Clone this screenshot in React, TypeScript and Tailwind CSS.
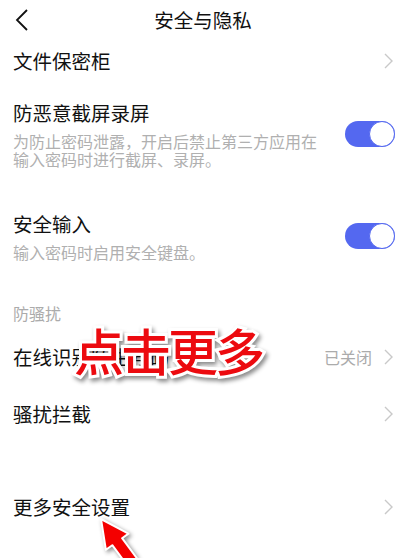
import React from 'react';

const font = { fontFamily: '"Noto Sans CJK SC", "Noto Sans", sans-serif' };

const Chevron = () => (
  <svg width="9" height="16" viewBox="0 0 9 16" className="shrink-0">
    <polyline points="1,1 8,8 1,15" fill="none" stroke="#c9c9c9" strokeWidth="1.4" />
  </svg>
);

const Toggle = () => (
  <div className="relative w-[50px] h-[26px] rounded-full bg-[#5468f0] shrink-0">
    <div className="absolute right-0 top-0 w-[26px] h-[26px] rounded-full bg-white border-[1.5px] border-[#5468f0]" />
  </div>
);

const LinkRow = ({ label, value, className }: { label: string; value?: string; className?: string }) => (
  <div className={`flex items-center justify-between h-[26px] pl-[13px] pr-[11px] ${className ?? ''}`}>
    <span className="text-[19.5px] leading-[26px] text-[#111]">{label}</span>
    <div className="flex items-center gap-[12px]">
      {value && <span className="text-[16px] text-[#ababab]">{value}</span>}
      <Chevron />
    </div>
  </div>
);

const SwitchRow = ({ label, desc, className }: { label: string; desc: string[]; className?: string }) => (
  <div className={`flex items-center justify-between pl-[13px] pr-[9px] ${className ?? ''}`}>
    <div className="flex flex-col">
      <span className="text-[19.5px] leading-[26px] text-[#111]">{label}</span>
      <div className="mt-[6px] flex flex-col">
        {desc.map((d) => (
          <span key={d} className="text-[16px] leading-[18px] text-[#b0b0b0]">{d}</span>
        ))}
      </div>
    </div>
    <Toggle />
  </div>
);

export default function App() {
  return (
    <div className="relative w-[404px] h-[558px] overflow-hidden bg-white" style={font}>
      <div className="relative flex items-center justify-center h-[40px]">
        <svg width="14" height="22" viewBox="0 0 14 22" className="absolute left-[15px] top-[9px]">
          <polyline points="12,1 2,11 12,21" fill="none" stroke="#111" strokeWidth="1.8" />
        </svg>
        <span className="text-[19.5px] text-[#111] pl-[2px]">安全与隐私</span>
      </div>

      <LinkRow label="文件保密柜" className="mt-[8px]" />

      <SwitchRow
        label="防恶意截屏录屏"
        desc={['为防止密码泄露，开启后禁止第三方应用在', '输入密码时进行截屏、录屏。']}
        className="mt-[26px]"
      />

      <SwitchRow label="安全输入" desc={['输入密码时启用安全键盘。']} className="mt-[43px]" />

      <div className="mt-[42px] pl-[13px] h-[20px] text-[16px] leading-[20px] text-[#ababab]">防骚扰</div>

      <LinkRow label="在线识别陌生号码" value="已关闭" className="mt-[21px]" />
      <LinkRow label="骚扰拦截" className="mt-[31px]" />
      <LinkRow label="更多安全设置" className="mt-[67px]" />

      <div
        className="absolute left-[74px] top-[319px] text-[50px] leading-[60px] font-medium text-[#ec0a0f] tracking-[-3px] [paint-order:stroke_fill] [-webkit-text-stroke:6px_white] [filter:drop-shadow(2px_3px_2px_rgba(0,0,0,0.45))]"
      >
        点击更多
      </div>

      <svg
        width="404"
        height="558"
        viewBox="0 0 404 558"
        className="absolute left-0 top-0 pointer-events-none [filter:drop-shadow(2px_2px_2px_rgba(0,0,0,0.45))]"
      >
        <polygon
          points="101,519 128.5,533.6 122.1,538.2 145.3,569.6 135.5,576.6 112.3,545.2 105.9,549.8"
          fill="#f40000"
          stroke="white"
          strokeWidth="2"
          strokeLinejoin="round"
        />
      </svg>
    </div>
  );
}
